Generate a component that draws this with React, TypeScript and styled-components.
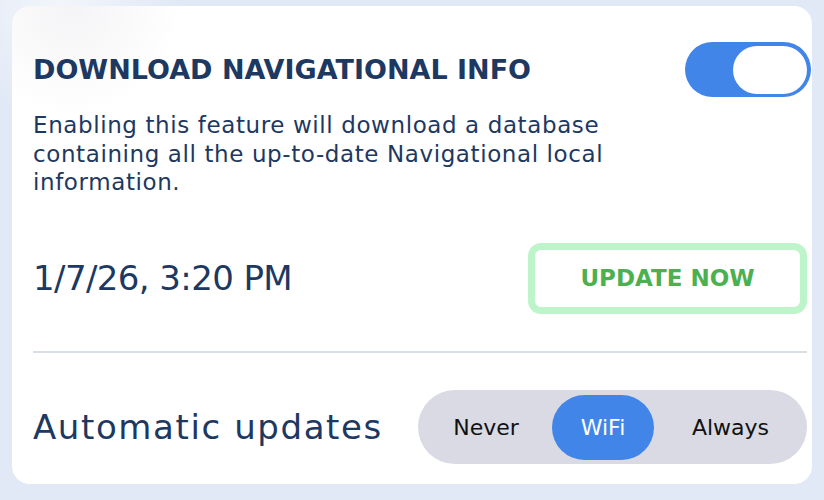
import React from 'react';
import styled, { createGlobalStyle } from 'styled-components';

const GlobalStyle = createGlobalStyle`
	body {
		margin: 0;
		background: #e1e9f6;
		font-family: 'DejaVu Sans', 'Liberation Sans', sans-serif;
	}
`;

const Page = styled.div`
	width: 824px;
	height: 500px;
	box-sizing: border-box;
	padding: 6px 12px 0 12px;
	background: radial-gradient(circle at 60px 0, #f2f5fb 0, #e1e9f6 120px);
`;

const Card = styled.section`
	width: 800px;
	height: 478px;
	box-sizing: border-box;
	background: radial-gradient(circle at 60px 0, #f4f4f6 0, #ffffff 110px);
	border-radius: 18px;
	padding: 36px 5px 20px 21px;
	color: #1d3861;
	display: flex;
	flex-direction: column;
`;

const HeaderRow = styled.div`
	display: flex;
	align-items: center;
	justify-content: space-between;
`;

const Title = styled.h2`
	margin: 0;
	font-size: 27px;
	font-weight: 700;
`;

const Toggle = styled.div<{ on: boolean }>`
	width: 126px;
	height: 55px;
	box-sizing: border-box;
	margin-right: -4px;
	border-radius: 28px;
	background: ${(p) => (p.on ? '#4285e9' : '#d9d9e3')};
	display: flex;
	align-items: center;
	justify-content: ${(p) => (p.on ? 'flex-end' : 'flex-start')};
	padding: 0 4px;
`;

const Knob = styled.div`
	width: 74px;
	height: 48px;
	border-radius: 24px;
	background: #ffffff;
`;

const Description = styled.p`
	margin: 14px 0 0 0;
	width: 640px;
	font-size: 23px;
	line-height: 28.5px;
	letter-spacing: 0.6px;
`;

const UpdateRow = styled.div`
	display: flex;
	align-items: center;
	justify-content: space-between;
	margin-top: 46px;
`;

const LastUpdate = styled.div`
	font-size: 34px;
	letter-spacing: -0.6px;
`;

const UpdateButton = styled.button`
	width: 279px;
	height: 71px;
	box-sizing: border-box;
	border: 7px solid #bdf4ca;
	border-radius: 13px;
	background: #ffffff;
	color: #4caf50;
	font-family: inherit;
	font-size: 23px;
	font-weight: 700;
	cursor: pointer;
`;

const Divider = styled.hr`
	border: none;
	border-top: 2px solid #dadfe5;
	margin: 37px 0 0 0;
`;

const AutoRow = styled.div`
	display: flex;
	align-items: center;
	justify-content: space-between;
	margin-top: auto;
`;

const AutoLabel = styled.div`
	font-size: 34px;
	letter-spacing: 1.6px;
`;

const Segmented = styled.div`
	width: 389px;
	height: 74px;
	border-radius: 37px;
	background: #d9dae3;
	display: grid;
	grid-template-columns: 132px 102px 1fr;
	align-items: center;
	padding-left: 2px;
	box-sizing: border-box;
`;

const Option = styled.button<{ active: boolean }>`
	height: 65px;
	border: none;
	border-radius: 33px;
	padding: 0;
	background: ${(p) => (p.active ? '#4285e9' : 'transparent')};
	color: ${(p) => (p.active ? '#ffffff' : '#111111')};
	font-family: inherit;
	font-size: 22px;
	cursor: pointer;
`;

export default function App(): JSX.Element {
	const [enabled, setEnabled] = React.useState(true);
	const [mode, setMode] = React.useState('WiFi');

	return (
		<>
			<GlobalStyle />
			<Page>
				<Card>
					<HeaderRow>
						<Title>DOWNLOAD NAVIGATIONAL INFO</Title>
						<Toggle on={enabled} onClick={() => setEnabled(!enabled)}>
							<Knob />
						</Toggle>
					</HeaderRow>
					<Description>
						Enabling this feature will download a database containing all the
						up-to-date Navigational local information.
					</Description>
					<UpdateRow>
						<LastUpdate>1/7/26, 3:20 PM</LastUpdate>
						<UpdateButton>UPDATE NOW</UpdateButton>
					</UpdateRow>
					<Divider />
					<AutoRow>
						<AutoLabel>Automatic updates</AutoLabel>
						<Segmented>
							{['Never', 'WiFi', 'Always'].map((m) => (
								<Option key={m} active={mode === m} onClick={() => setMode(m)}>
									{m}
								</Option>
							))}
						</Segmented>
					</AutoRow>
				</Card>
			</Page>
		</>
	);
}
